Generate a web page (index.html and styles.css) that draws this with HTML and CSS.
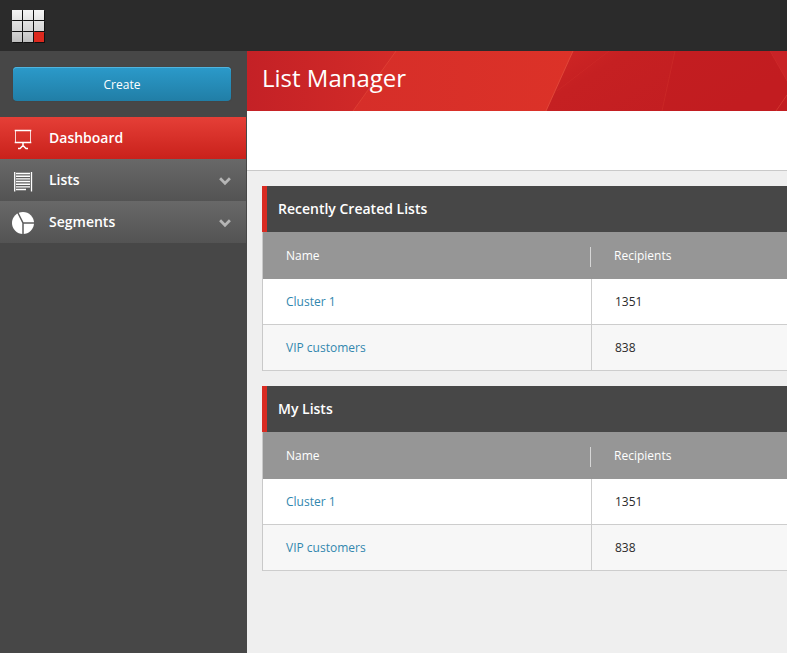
FILE: index.html
```html
<!DOCTYPE html>
<html lang="en">
<head>
<meta charset="utf-8">
<title>List Manager</title>
<link rel="stylesheet" href="styles.css">
</head>
<body>
<header class="topbar">
  <div class="logo"><i></i><i></i><i></i><i></i><i></i><i></i><i></i><i></i><i></i></div>
</header>
<div class="layout">
  <aside class="sidebar">
    <button class="create">Create</button>
    <nav>
      <a class="item active">
        <svg class="icon" width="24" height="24" viewBox="0 0 24 24" fill="none" stroke="#fff"><path d="M3.700 3.500h16.600M3.700 15.500h16.600" stroke-width="1.300"/><path d="M4.500 3.500v12M19.500 3.500v12" stroke-opacity=".8"/><path d="M12 16v2.500M7 21.500h2l3-3 3 3h2" stroke-width="1.500"/></svg>
        <span>Dashboard</span>
      </a>
      <a class="item">
        <svg class="icon" width="24" height="24" viewBox="0 0 24 24" fill="none" stroke="#fff"><path d="M3.700 3v19.500M20.500 3v19.500" stroke-width="1.300"/><path d="M5 4.500h14M5 7.200h14M5 9.900h14M5 12.500h14M5 15.200h14M5 17.900h14M5 20.500h10" stroke-width="1.400"/></svg>
        <span>Lists</span>
        <svg class="chevron" width="12" height="9" viewBox="0 0 12 9"><path d="M1.100 1.200 6 6.200l4.900-5" fill="none" stroke="#b5b5b5" stroke-width="2.700"/></svg>
      </a>
      <a class="item">
        <svg class="icon" width="24" height="24" viewBox="0 0 24 24"><circle cx="12" cy="12" r="11" fill="#fff"/><path d="M6.500 1 12 12v11.500M12 12h11.500" fill="none" stroke="#5c5c5c" stroke-width="1.500"/></svg>
        <span>Segments</span>
        <svg class="chevron" width="12" height="9" viewBox="0 0 12 9"><path d="M1.100 1.200 6 6.200l4.900-5" fill="none" stroke="#b5b5b5" stroke-width="2.700"/></svg>
      </a>
    </nav>
  </aside>
  <main>
    <div class="banner">
      <svg class="facets" width="540" height="60" viewBox="0 0 540 60">
        <defs>
          <linearGradient id="left"><stop stop-color="#c42126"/><stop offset="1" stop-color="#d32b28"/></linearGradient>
          <linearGradient id="mid"><stop stop-color="#d62e29"/><stop offset="1" stop-color="#dc3228"/></linearGradient>
          <linearGradient id="right" x2="1" y2=".4"><stop stop-color="#d12725"/><stop offset=".3" stop-color="#c52022"/><stop offset="1" stop-color="#c21d21"/></linearGradient>
        </defs>
        <path d="M0 0h150l-43 60H0z" fill="url(#left)"/>
        <path d="M149 0h178l-27 60H106z" fill="url(#mid)"/>
        <path d="M326 0h214v60H299z" fill="url(#right)"/>
        <path d="M428 0h95l17 30v14l-11 16H415z" fill="#c21c20" fill-opacity=".5"/>
        <path d="M523 0h17v30z" fill="#c92226"/>
        <g fill="none" stroke="#e54d3d">
          <path d="m149 0-43 60" stroke-opacity=".55"/>
          <path d="m326 0-27 60" stroke-opacity=".8"/>
          <path d="m428 0-13 60M523 0l17 30" stroke-opacity=".22"/>
          <path d="m540 44-11 16" stroke-opacity=".5"/>
          <path d="m362 0-52 40" stroke-opacity=".15"/>
        </g>
      </svg>
      <h1>List Manager</h1>
    </div>
    <div class="toolbar"></div>
    <div class="content">
      <section class="panel">
        <h2>Recently Created Lists</h2>
        <div class="table">
          <div class="head"><span>Name</span><span>Recipients</span></div>
          <div class="row"><a>Cluster 1</a><span>1351</span></div>
          <div class="row"><a>VIP customers</a><span>838</span></div>
        </div>
      </section>
      <section class="panel">
        <h2>My Lists</h2>
        <div class="table">
          <div class="head"><span>Name</span><span>Recipients</span></div>
          <div class="row"><a>Cluster 1</a><span>1351</span></div>
          <div class="row"><a>VIP customers</a><span>838</span></div>
        </div>
      </section>
    </div>
  </main>
</div>
</body>
</html>
```
FILE: styles.css
```css
* { box-sizing: border-box; }
body {
  margin: 0;
  height: 653px;
  overflow: hidden;
  display: flex;
  flex-direction: column;
  font: 12px/18px "Open Sans", sans-serif;
  color: #2b2b2b;
  background: #efefef;
}
.topbar { height: 51px; padding: 10px 12px; background: #2b2b2b; }
.logo {
  display: grid;
  grid-template: repeat(3, 10px) / repeat(3, 10px);
  gap: 1px;
  width: 32px;
  filter: drop-shadow(1px 1px 0 #111);
}
.logo i { background: linear-gradient(#f5f5f5, #e5e5e5); }
.logo i:nth-child(n+4) { background: linear-gradient(#e3e3e3, #d5d5d5); }
.logo i:nth-child(n+7) { background: linear-gradient(#d2d2d2, #bebebe); }
.logo i:last-child { background: #dc291e; }
.layout { display: flex; flex: 1; }
.sidebar { width: 247px; flex: none; padding: 16px 1px 0 0; background: #474747; }
.create {
  display: block;
  width: 218px;
  height: 34px;
  margin: 0 0 16px 13px;
  padding: 1px 0 0;
  border: 0;
  border-radius: 4px;
  background: linear-gradient(#2b9aca, #217ea6);
  box-shadow: inset 0 1px #50b4df, 0 0 1px #333;
  color: #fff;
  font: 12px/18px "Open Sans", sans-serif;
}
.item {
  display: flex;
  align-items: center;
  height: 42px;
  padding: 0 15px 0 11px;
  background: linear-gradient(#686868, #535353);
  color: #fff;
  font-size: 14px;
  font-weight: 600;
}
.item.active { background: linear-gradient(#e53f37, #c9211b); }
.icon { margin: 2px 14px 0 0; }
.chevron { margin: 2px 0 0 auto; }
main { flex: 1; min-width: 0; }
.banner { display: grid; height: 60px; overflow: hidden; }
.banner > * { grid-area: 1 / 1; }
.facets { display: block; }
h1 {
  z-index: 1;
  margin: 0;
  padding: 10px 15px;
  color: #fff;
  font-size: 24px;
  font-weight: 400;
  line-height: 34px;
}
.toolbar { height: 60px; background: #fff; border-bottom: 1px solid #c9c9c9; }
.content { padding: 15px 0 0 15px; }
.panel { margin-bottom: 15px; }
h2 {
  margin: 0;
  height: 46px;
  padding-left: 11px;
  border-left: 5px solid #d92b22;
  background: #474747;
  color: #fff;
  font-size: 14px;
  font-weight: 600;
  line-height: 46px;
}
.table { border-left: 1px solid #c9c9c9; }
.head, .row { display: grid; grid-template-columns: 328px 1fr; align-items: center; }
.head { height: 47px; background: #969696; color: #fff; }
.head > * { padding-left: 23px; }
.head > :last-child {
  height: 20px;
  margin: 2px 0 0 -1px;
  border-left: 1px solid #d6d6d6;
}
.row { height: 46px; border-bottom: 1px solid #cdcdcd; background: #fff; align-items: stretch; line-height: 45px; }
.row > * { padding-left: 23px; }
.row > :last-child { border-left: 1px solid #cdcdcd; }
.row:last-child { background: #f7f7f7; }
.row a { color: #3287ae; }
```
